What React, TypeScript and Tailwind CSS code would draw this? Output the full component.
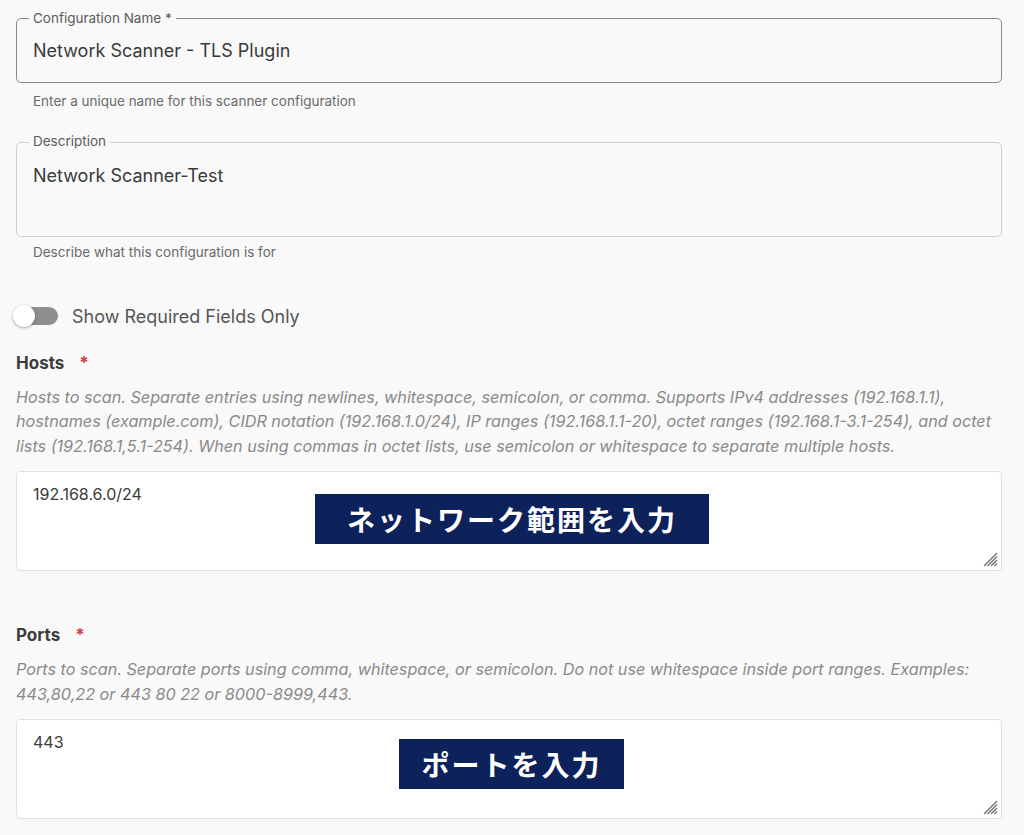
import React from "react";

const Required = () => <span className="ml-[15px] text-[#d33c4f]">*</span>;

// little striped grip drawn in the corner of a resizable textarea
const ResizeGrip = () => (
  <svg
    width="16"
    height="16"
    viewBox="0 0 16 16"
    className="absolute bottom-[3px] right-[3px]"
  >
    <path
      d="M15 2 L2 15 M15 5.5 L5.5 15 M15 9 L9 15 M15 12.5 L12.5 15"
      stroke="#7a7a7a"
      strokeWidth="1.5"
    />
  </svg>
);

const Callout = ({ text, className }: { text: string; className: string }) => (
  <div
    className={`absolute flex h-[50px] items-center justify-center bg-[#0d215b] text-[28px] font-bold tracking-[2px] text-white ${className}`}
    style={{ fontFamily: '"Noto Sans CJK JP", "Noto Sans", sans-serif' }}
  >
    {text}
  </div>
);

const OutlinedField = ({
  label,
  value,
  helper,
  tall,
  dark,
}: {
  label: string;
  value: string;
  helper: string;
  tall?: boolean;
  dark?: boolean;
}) => (
  <div>
    <fieldset
      className={`rounded-[5px] border px-[16px] ${
        dark ? "border-[#8a8a8a]" : "border-[#cfcfcf]"
      } ${tall ? "h-[102px]" : "h-[71px]"}`}
    >
      <legend className="-ml-[4px] px-[4px] text-[13.5px] leading-none text-[#5b5b5b]">{label}</legend>
      <div className={`text-[18px] leading-none text-[#3a3a3a] ${tall ? "pt-[18px]" : "pt-[16px]"}`}>{value}</div>
    </fieldset>
    <p className={`pl-[17px] text-[13.5px] text-[#6a6a6a] ${tall ? "mt-[5px]" : "mt-[8px]"}`}>{helper}</p>
  </div>
);

const TextAreaField = ({
  title,
  hint,
  value,
  callout,
  calloutPos,
}: {
  title: string;
  hint: React.ReactNode;
  value: string;
  callout: string;
  calloutPos: string;
}) => (
  <section>
    <h3 className="text-[17px] font-bold leading-none text-[#3d3d3d]">
      {title}
      <Required />
    </h3>
    <p className="mt-[13px] text-[16.2px] italic leading-[24.5px] text-[#8a8a8a]">{hint}</p>
    <div className="relative mt-[13px] h-[100px] rounded-[4px] border border-[#e1e1e1] bg-white px-[16px] pt-[10px] text-[16px] text-[#3a3a3a]">
      {value}
      <Callout text={callout} className={calloutPos} />
      <ResizeGrip />
    </div>
  </section>
);

export default function App() {
  return (
    <div
      className="min-h-[835px] bg-[#f9f9f9] px-[16px] pt-[12px] pr-[22px]"
      style={{ fontFamily: "Inter, 'Noto Sans', sans-serif" }}
    >
      <OutlinedField
        label="Configuration Name *"
        value="Network Scanner - TLS Plugin"
        helper="Enter a unique name for this scanner configuration"
        dark
      />
      <div className="mt-[24px]">
        <OutlinedField
          label="Description"
          value="Network Scanner-Test"
          helper="Describe what this configuration is for"
          tall
        />
      </div>

      <div className="mt-[40px] flex items-center">
        <div className="relative h-[18px] w-[44px] rounded-full bg-[#8e8e8e] -ml-[2px]">
          <div className="absolute -left-[1px] -top-[2px] h-[22px] w-[22px] rounded-full bg-white shadow-[0_1px_3px_rgba(0,0,0,0.35)]" />
        </div>
        <span className="ml-[14px] text-[18px] text-[#555]">Show Required Fields Only</span>
      </div>

      <div className="mt-[25px]">
        <TextAreaField
          title="Hosts"
          hint={
            <>
              Hosts to scan. Separate entries using newlines, whitespace, semicolon, or comma. Supports IPv4
              addresses (192.168.1.1),
              <br />
              hostnames (example.com), CIDR notation (192.168.1.0/24), IP ranges (192.168.1.1-20), octet ranges
              (192.168.1-3.1-254), and octet
              <br />
              lists (192.168.1,5.1-254). When using commas in octet lists, use semicolon or whitespace to separate
              multiple hosts.
            </>
          }
          value="192.168.6.0/24"
          callout="ネットワーク範囲を入力"
          calloutPos="left-[298px] top-[22px] w-[394px]"
        />
      </div>

      <div className="mt-[56px]">
        <TextAreaField
          title="Ports"
          hint={
            <>
              Ports to scan. Separate ports using comma, whitespace, or semicolon. Do not use whitespace inside port
              ranges. Examples:
              <br />
              443,80,22 or 443 80 22 or 8000-8999,443.
            </>
          }
          value="443"
          callout="ポートを入力"
          calloutPos="left-[382px] top-[19px] w-[225px]"
        />
      </div>
    </div>
  );
}
